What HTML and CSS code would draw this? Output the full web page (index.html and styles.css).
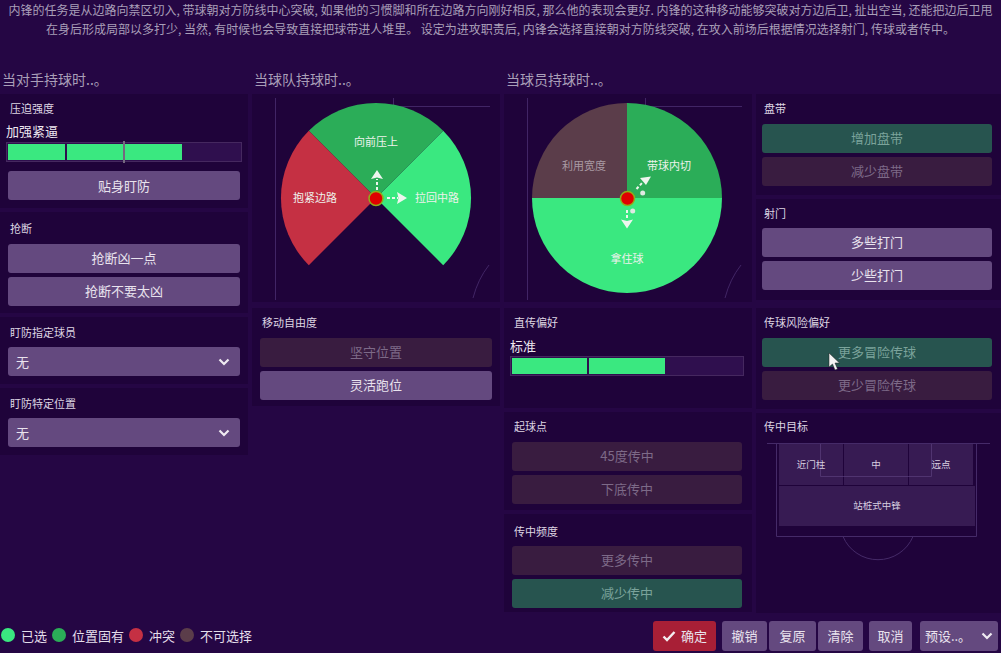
FILE: index.html
```html
<!DOCTYPE html>
<html lang="zh">
<head>
<meta charset="utf-8">
<title>内锋</title>
<link rel="stylesheet" href="styles.css">
</head>
<body>
<header class="intro">
<p>内锋的任务是从边路向禁区切入, 带球朝对方防线中心突破, 如果他的习惯脚和所在边路方向刚好相反, 那么他的表现会更好. 内锋的这种移动能够突破对方边后卫, 扯出空当, 还能把边后卫甩</p>
<p>在身后形成局部以多打少, 当然, 有时候也会导致直接把球带进人堆里。 设定为进攻职责后, 内锋会选择直接朝对方防线突破, 在攻入前场后根据情况选择射门, 传球或者传中。</p>
</header>
<main class="columns">
  <section class="col">
    <h2 class="col-title">当对手持球时..。</h2>
    <div class="panel p-press">
      <div class="label">压迫强度</div>
      <div class="value">加强紧逼</div>
      <div class="bar bar-four">
        <span class="seg on"></span><span class="seg on"></span><span class="seg on"></span><span class="seg"></span>
        <i class="tick"></i>
      </div>
      <div class="btn main">贴身盯防</div>
    </div>
    <div class="panel p-tackle">
      <div class="label">抢断</div>
      <div class="btn main">抢断凶一点</div>
      <div class="btn main">抢断不要太凶</div>
    </div>
    <div class="panel p-mark">
      <div class="label">盯防指定球员</div>
      <div class="btn main select"><span>无</span><svg class="chev" viewBox="0 0 12 8"><path d="M1.500 1.500 6 6l4.500-4.500"/></svg></div>
    </div>
    <div class="panel p-mark">
      <div class="label">盯防特定位置</div>
      <div class="btn main select"><span>无</span><svg class="chev" viewBox="0 0 12 8"><path d="M1.500 1.500 6 6l4.500-4.500"/></svg></div>
    </div>
  </section>

  <section class="col">
    <h2 class="col-title">当球队持球时..。</h2>
    <div class="panel p-chart">
      <svg class="wheel" viewBox="0 0 248 208">
        <g class="pitch"><path d="M23.500 4V206M141.500 4V12M141.500 12.500H238M237 171Q226 185 221 204"/></g>
        <path class="s-sel" d="M124 104 191.200 36.800A95 95 0 0 1 191.200 171.200Z"/>
        <path class="s-fix" d="M124 104 56.800 36.800A95 95 0 0 1 191.200 36.800Z"/>
        <path class="s-bad" d="M124 104 56.800 171.200A95 95 0 0 1 56.800 36.800Z"/>
        <text class="w-txt" x="124" y="52">向前压上</text>
        <text class="w-txt" x="63" y="108">抱紧边路</text>
        <text class="w-txt" x="185" y="108">拉回中路</text>
        <path class="arrow-line" d="M125 96V85"/><path class="arrow-head" d="M125 76 131 85 125 83.500 119 85Z"/>
        <path class="arrow-line" d="M135 104H146"/><path class="arrow-head" d="M155 104 145 98 146.500 104 145 110Z"/>
        <circle class="dot" cx="124" cy="104.500" r="7"/>
      </svg>
    </div>
    <div class="panel p-move">
      <div class="label">移动自由度</div>
      <div class="btn off">坚守位置</div>
      <div class="btn main">灵活跑位</div>
    </div>
  </section>

  <section class="col">
    <h2 class="col-title">当球员持球时..。</h2>
    <div class="panel p-chart">
      <svg class="wheel" viewBox="0 0 248 208">
        <g class="pitch"><path d="M23.500 4V206M141.500 4V12M141.500 12.500H238M237 171Q226 185 221 204"/></g>
        <path class="s-sel" d="M28 104A95 95 0 0 0 218 104Z"/>
        <path class="s-fix" d="M123 104V9A95 95 0 0 1 218 104Z"/>
        <path class="s-none" d="M123 104V9A95 95 0 0 0 28 104Z"/>
        <text class="w-txt dim" x="80" y="76">利用宽度</text>
        <text class="w-txt" x="165" y="76">带球内切</text>
        <text class="w-txt" x="123" y="169">拿住球</text>
        <path class="arrow-line" d="M132.500 95 138 89"/><path class="arrow-head" d="M147 82.500 136 84 139 87.500 142 91Z"/>
        <circle class="ball" cx="138.700" cy="99" r="2.500"/>
        <path class="arrow-line" d="M123 116V126"/><path class="arrow-head" d="M123 134.500 117 125.500 123 127 129 125.500Z"/>
        <circle class="ball" cx="128.700" cy="117" r="2.500"/>
        <circle class="dot" cx="123.500" cy="104.500" r="7"/>
      </svg>
    </div>
    <div class="panel p-slider">
      <div class="label">直传偏好</div>
      <div class="value">标准</div>
      <div class="bar bar-three">
        <span class="seg on"></span><span class="seg on"></span><span class="seg"></span>
      </div>
    </div>
    <div class="panel p-cross">
      <div class="label">起球点</div>
      <div class="btn off">45度传中</div>
      <div class="btn off">下底传中</div>
    </div>
    <div class="panel p-cross p-cross-low">
      <div class="label">传中频度</div>
      <div class="btn off">更多传中</div>
      <div class="btn sel">减少传中</div>
    </div>
  </section>

  <section class="col col-last">
    <div class="panel p-side first">
      <div class="label">盘带</div>
      <div class="btn sel">增加盘带</div>
      <div class="btn off">减少盘带</div>
    </div>
    <div class="panel p-side shot">
      <div class="label">射门</div>
      <div class="btn main">多些打门</div>
      <div class="btn main">少些打门</div>
    </div>
    <div class="panel p-side risk">
      <div class="label">传球风险偏好</div>
      <div class="btn sel">更多冒险传球</div>
      <div class="btn off">更少冒险传球</div>
    </div>
    <div class="panel p-target">
      <div class="label">传中目标</div>
      <div class="target">
        <svg class="target-lines" viewBox="0 0 245 130">
          <path d="M11 0.500H234M20.500 0.500V93.500H220.500V0.500M64.500 0.500V33.500H175.500V0.500M87 93.500A38 38 0 0 0 157 93.500"/>
        </svg>
        <div class="zones">
          <div class="zone">近门柱</div>
          <div class="zone">中</div>
          <div class="zone">远点</div>
          <div class="zone wide">站桩式中锋</div>
        </div>
      </div>
    </div>
  </section>
</main>
<footer class="footer">
  <ul class="legend">
    <li><i class="ld c-sel"></i>已选</li>
    <li><i class="ld c-fix"></i>位置固有</li>
    <li><i class="ld c-bad"></i>冲突</li>
    <li><i class="ld c-none"></i>不可选择</li>
  </ul>
  <div class="actions">
    <div class="act ok"><svg class="check" viewBox="0 0 14 12"><path d="M1.500 6.500 5 10l7.500-8"/></svg>确定</div>
    <div class="act w45">撤销</div>
    <div class="act w47">复原</div>
    <div class="act w45">清除</div>
    <div class="act w43 g-cancel">取消</div>
    <div class="act preset">预设..。<svg class="chev" viewBox="0 0 12 8"><path d="M1.500 1.500 6 6l4.500-4.500"/></svg></div>
  </div>
</footer>
<svg class="cursor" viewBox="0 0 12 20"><path d="M1 1V15L4.500 12 7 18 9.500 17 7 11H11.500Z"/></svg>
</body>
</html>
```
FILE: styles.css
```css
* { box-sizing: border-box; }
html, body { margin: 0; padding: 0; }
body {
  position: relative;
  width: 1001px;
  height: 653px;
  overflow: hidden;
  background: #250644;
  color: #e6dfea;
  font-family: "Noto Sans CJK SC", "Noto Sans", sans-serif;
}
.intro {
  height: 70px;
  padding-top: 0;
  text-align: center;
  font-size: 12px;
  line-height: 19px;
  color: #a99fb8;
}
.intro p { margin: 0; white-space: nowrap; }
.columns {
  display: flex;
  height: 546px;
  gap: 4px;
}
.col {
  width: 248px;
  display: flex;
  flex-direction: column;
  gap: 4px;
}
.col-last { width: 245px; }
.col-title {
  margin: -1px 0 -3px;
  height: 24px;
  padding-left: 2px;
  font-size: 14px;
  font-weight: 400;
  line-height: 20px;
  color: #a99fb8;
}
.panel {
  background: #1f033a;
  padding: 0 8px 7px;
}
.label {
  height: 30px;
  padding: 5px 2px 0;
  font-size: 11px;
  line-height: 18px;
  color: #ddd5e2;
}
.value {
  height: 21px;
  margin: -3px 0 0 -2px;
  font-size: 13px;
  line-height: 19px;
  color: #eee8f0;
}
.bar {
  position: relative;
  display: flex;
  gap: 2px;
  height: 20px;
  margin: 0 -2px;
  padding: 1px;
  background: #2f0f4e;
  border: 1px solid #45285f;
}
.seg { flex: 1; }
.seg.on { background: #3ae880; }
.bar-three { margin-right: 0; }
.tick {
  position: absolute;
  left: 116px;
  top: -2px;
  width: 2px;
  height: 22px;
  background: #75697f;
}
.btn {
  display: flex;
  align-items: center;
  justify-content: center;
  height: 29px;
  margin-bottom: 4px;
  padding-bottom: 2px;
  border-radius: 3px;
  font-size: 13px;
}
.btn:last-child { margin-bottom: 0; }
.main { background: #64497f; color: #e9e3ee; }
.off { background: #391c40; color: #7d6a88; }
.sel { background: #27544f; color: #7ba39b; }
.select {
  justify-content: space-between;
  padding: 0 10px 0 8px;
}
.chev {
  width: 12px;
  height: 8px;
  fill: none;
  stroke: #f0ebf2;
  stroke-width: 2.200;
}
.p-press { height: 114px; }
.p-press .bar { margin-bottom: 9px; }
.p-press .btn { padding-bottom: 0; }
.p-tackle { height: 101px; }
.p-tackle .label { height: 32px; padding-top: 7px; }
.p-mark { height: 67px; }
.p-mark .label { padding-top: 6px; }
.p-chart { height: 208px; padding: 0; }
.wheel { display: block; width: 248px; height: 208px; }
.pitch path { fill: none; stroke: #412565; stroke-width: 1; }
.s-sel { fill: #3ae880; }
.s-fix { fill: #2bad58; }
.s-bad { fill: #c53043; }
.s-none { fill: #5b3d4a; }
.w-txt {
  font-size: 11px;
  text-anchor: middle;
  fill: #eef2ec;
}
.w-txt.dim { fill: #a99aa3; }
.arrow-line { fill: none; stroke: #eef5ee; stroke-width: 2; stroke-dasharray: 3 2; }
.arrow-head { fill: #eef5ee; }
.ball { fill: #dfe9e2; }
.dot { fill: #e00000; stroke: #8fae1a; stroke-width: 1.500; }
.p-move { height: 98px; margin-top: 2px; }
.p-slider { height: 100px; margin-top: 2px; }
.p-slider .value { margin-top: -2px; height: 20px; }
.p-cross { height: 98px; padding-right: 10px; }
.p-cross-low .label { height: 32px; padding-top: 8px; }
.p-side { height: 101px; padding-left: 6px; padding-right: 9px; }
.p-side .label { padding-left: 2px; }
.p-side.first { margin-top: 24px; }
.p-side.shot .label { height: 29px; }
.p-side.risk { margin-top: 4px; }
.p-target { height: 200px; padding: 0; }
.p-target .label { padding: 4px 0 0 8px; height: 30px; }
.target {
  position: relative;
  height: 130px;
}
.target-lines {
  position: absolute;
  left: 0;
  top: 0;
  width: 245px;
  height: 130px;
  fill: none;
  stroke: #452a68;
  stroke-width: 1;
}
.zones {
  position: relative;
  display: grid;
  grid-template-columns: 64px 64px 64px 1px;
  gap: 1px;
  width: 196px;
  margin-left: 23px;
  padding-top: 1px;
}
.zone {
  display: flex;
  align-items: center;
  justify-content: center;
  height: 41px;
  padding-bottom: 2px;
  background: rgba(100, 73, 127, 0.36);
  font-size: 9.500px;
  color: #d7cfe0;
}
.zone.wide {
  grid-column: 1 / 5;
  height: 40px;
}
.footer {
  display: flex;
  justify-content: space-between;
  align-items: flex-start;
  height: 37px;
}
.legend {
  display: flex;
  align-items: center;
  height: 30px;
  margin: 4px 0 0;
  padding: 0 0 0 1px;
  list-style: none;
  font-size: 13px;
  color: #e4deea;
}
.legend li { display: flex; align-items: center; margin-right: 5px; }
.ld {
  width: 14px;
  height: 14px;
  margin-right: 6px;
  border-radius: 50%;
}
.c-sel { background: #3ae880; }
.c-fix { background: #2bad58; }
.c-bad { background: #c53043; }
.c-none { background: #5b3d4a; }
.actions {
  display: flex;
  gap: 2px;
  padding-right: 3px;
  margin-top: 5px;
}
.act {
  display: flex;
  align-items: center;
  justify-content: center;
  height: 30px;
  padding-bottom: 1px;
  border-radius: 3px;
  background: #64497f;
  font-size: 13px;
  color: #e9e3ee;
}
.ok { width: 63px; background: #a81f36; margin-right: 4px; }
.check {
  width: 14px;
  height: 12px;
  margin-right: 5px;
  fill: none;
  stroke: #f4eef0;
  stroke-width: 2.400;
}
.w45 { width: 45px; }
.w47 { width: 47px; }
.w43 { width: 43px; }
.g-cancel { margin-left: 4px; }
.preset {
  width: 78px;
  margin-left: 6px;
  gap: 10px;
}
.cursor {
  position: absolute;
  left: 828px;
  top: 352px;
  width: 12px;
  height: 20px;
  fill: #f4f4f4;
  stroke: #222;
  stroke-width: 0.500;
}
```
